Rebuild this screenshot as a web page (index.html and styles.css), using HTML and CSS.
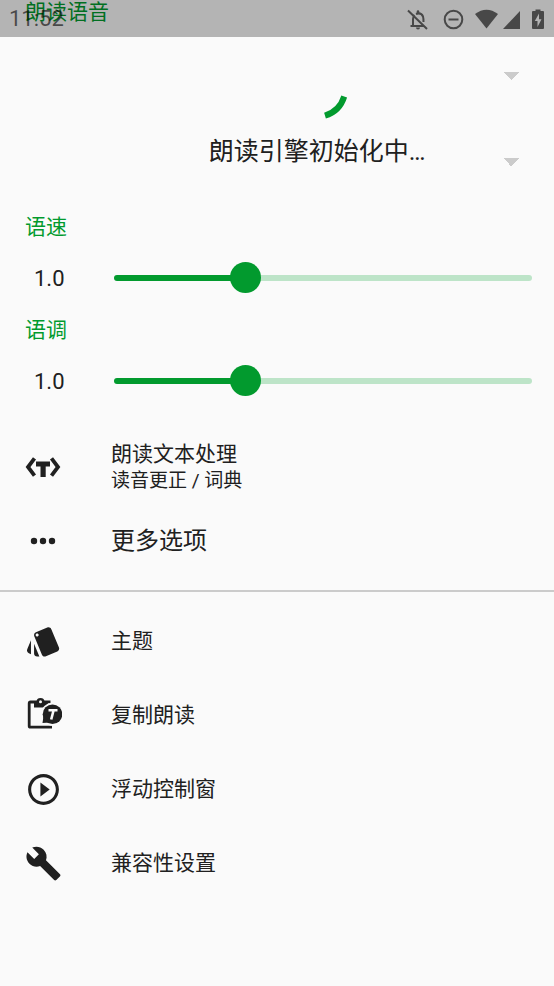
FILE: index.html
```html
<!DOCTYPE html>
<html lang="zh-CN">
<head>
<meta charset="utf-8">
<meta name="viewport" content="width=device-width, initial-scale=1">
<title>朗读语音</title>
<link rel="stylesheet" href="styles.css">
</head>
<body>
<header class="status">
  <span class="clock">11:52</span>
  <svg class="status-icons" width="140" height="24" viewBox="0 0 140 24" aria-hidden="true">
    <g fill="none" stroke="currentColor" stroke-width="2">
      <path d="M2 3.500L21 22M4.500 19H18M7 19V12Q7 9.500 8.500 8M10 7Q15 5 17 9.500Q17.500 11 17.500 15"/>
      <circle cx="47.500" cy="12.500" r="8.800"/>
      <path d="M42.500 12.500H52.500"/>
    </g>
    <g fill="currentColor">
      <path d="M10.700 6V4.500a1.300 1.300 0 0 1 2.600 0V6zM10 20.500h4a2 2 0 0 1-4 0z"/>
      <path d="M69 7Q80.500-1.500 92 7L80.500 21.500z"/>
      <path d="M114 4V22H97z"/>
      <path fill-rule="evenodd" d="M129.500 4V2.500h5V4H137q1 0 1 1V21q0 1-1 1H127q-1 0-1-1V5q0-1 1-1zM133 6.500L128.800 14H131.500V20L135.500 12.200H133z"/>
    </g>
  </svg>
</header>
<main>
  <section class="voice">
    <h2 class="label">朗读语音</h2>
    <select class="picker" aria-label="朗读引擎" disabled><option></option></select>
    <select class="picker" aria-label="语音" disabled><option></option></select>
    <div class="loading" role="status">
      <svg width="64" height="64" viewBox="0 0 64 64" aria-hidden="true"><path d="M59.200 40.500A29 29 0 0 1 40 59.700" fill="none" stroke="#029a2e" stroke-width="6"/></svg>
      <span>朗读引擎初始化中…</span>
    </div>
  </section>
  <section class="setting">
    <label class="label" for="rate">语速</label>
    <div class="control"><output for="rate">1.0</output><input id="rate" type="range" min="0" max="100" value="30"></div>
  </section>
  <section class="setting">
    <label class="label" for="pitch">语调</label>
    <div class="control"><output for="pitch">1.0</output><input id="pitch" type="range" min="0" max="100" value="30"></div>
  </section>
  <nav class="menu">
    <button class="item" type="button">
      <svg class="icon" viewBox="0 0 37 37" aria-hidden="true"><path d="M9.500 9.300L3 18L9.500 26.700M26.500 9.300L33 18L26.500 26.700" fill="none" stroke="currentColor" stroke-width="3.800"/><path d="M11 12.500H25V17.500H20.700V28H15.500V17.500H11z"/></svg>
      <span class="text"><span>朗读文本处理</span><small>读音更正 / 词典</small></span>
    </button>
    <button class="item more" type="button">
      <svg class="icon" viewBox="0 0 37 37" aria-hidden="true"><circle cx="9" cy="18" r="3.200"/><circle cx="18" cy="18" r="3.200"/><circle cx="27" cy="18" r="3.200"/></svg>
      <span class="text">更多选项</span>
    </button>
  </nav>
  <nav class="menu divided">
    <button class="item" type="button">
      <svg class="icon" viewBox="0 0 24 24" aria-hidden="true"><path d="M2.530 19.650l1.340.56v-9.030l-2.430 5.860c-.41 1.020.08 2.190 1.090 2.610zm19.500-3.700L17.070 3.980c-.31-.75-1.040-1.210-1.810-1.230-.26 0-.53.04-.79.15L7.100 5.950c-.75.31-1.210 1.030-1.230 1.800-.01.27.04.54.15.8l4.960 11.970c.31.76 1.050 1.220 1.830 1.230.26 0 .52-.05.77-.15l7.360-3.050c1.020-.42 1.510-1.590 1.090-2.600zM7.880 8.750c-.55 0-1-.45-1-1s.45-1 1-1 1 .45 1 1-.45 1-1 1zm-2 11c0 1.100.9 2 2 2h1.450l-3.450-8.340v6.340z"/></svg>
      <span class="text">主题</span>
    </button>
    <button class="item" type="button">
      <svg class="icon" viewBox="0 0 37 37" aria-hidden="true"><path d="M27 30.200H5.500Q4.200 30.200 4.200 29V6.500Q4.200 5 5.500 5H25.500" fill="none" stroke="currentColor" stroke-width="2.800"/><path d="M9 5H23V10.500H9z"/><circle cx="15.500" cy="5" r="4"/><circle cx="15.500" cy="4.800" r="1.500" fill="#fafafa"/><circle cx="27.500" cy="17.200" r="11.500" fill="#fafafa"/><circle cx="27.500" cy="17.200" r="9.800"/><path d="M17.500 26L18.500 19L25 25.500z"/><path d="M23.500 13.200H32.500M28.600 13.200L26.200 22.500" fill="none" stroke="#fafafa" stroke-width="2.600"/></svg>
      <span class="text">复制朗读</span>
    </button>
    <button class="item" type="button">
      <svg class="icon" viewBox="0 0 24 24" aria-hidden="true"><path d="M10 16.500l6-4.500-6-4.500v9zM12 2C6.480 2 2 6.480 2 12s4.480 10 10 10 10-4.480 10-10S17.520 2 12 2zm0 18c-4.410 0-8-3.590-8-8s3.590-8 8-8 8 3.590 8 8-3.590 8-8 8z"/></svg>
      <span class="text">浮动控制窗</span>
    </button>
    <button class="item" type="button">
      <svg class="icon" viewBox="0 0 24 24" aria-hidden="true"><path d="M22.700 19l-9.100-9.100c.9-2.300.4-5-1.500-6.900-2-2-5-2.400-7.400-1.300L9 6 6 9 1.600 4.700C.4 7.100.9 10.100 2.900 12.100c1.900 1.900 4.600 2.400 6.900 1.500l9.100 9.100c.4.4 1 .4 1.400 0l2.300-2.300c.5-.4.5-1.100.1-1.400z"/></svg>
      <span class="text">兼容性设置</span>
    </button>
  </nav>
</main>
</body>
</html>
```

FILE: styles.css
```css
* { box-sizing: border-box; }
body {
  margin: 0;
  min-height: 100vh;
  background: #fafafa;
  color: #202020;
  font-family: Roboto, "Noto Sans CJK SC", sans-serif;
  font-size: 21px;
}
.status {
  position: absolute;
  z-index: 1;
  top: 0;
  left: 0;
  right: 0;
  height: 37px;
  padding: 0 8px 0 9px;
  display: flex;
  align-items: center;
  justify-content: space-between;
  background: rgba(0, 0, 0, 0.28);
  color: #484848;
}
.clock { color: rgba(0, 0, 0, 0.6); font-size: 22px; }
.label {
  display: block;
  margin: 0;
  padding-left: 25px;
  color: #029a2e;
  font-size: 21px;
  font-weight: 400;
  line-height: 38px;
}
.voice { position: relative; padding-bottom: 3px; }
.voice .label { line-height: 24px; padding-bottom: 9px; }
.picker {
  appearance: none;
  display: block;
  width: 100%;
  height: 86px;
  border: 0;
  opacity: 1;
  background: conic-gradient(from -45deg at 50% 100%, #cbcbcb 90deg, transparent 0) right 35px center / 16px 8px no-repeat;
}
.loading {
  position: absolute;
  top: 56px;
  left: 80px;
  right: 0;
  display: flex;
  flex-direction: column;
  align-items: center;
  gap: 14px;
  font-size: 25px;
  line-height: 36px;
}
.control {
  display: flex;
  align-items: center;
  height: 64px;
  margin-bottom: 1px;
  padding-right: 22px;
}
.control output { width: 114px; padding-left: 34px; font-size: 22px; }
input[type="range"] {
  appearance: none;
  flex: 1;
  min-width: 0;
  height: 31px;
  margin: 0;
  background: none;
}
input[type="range"]::-webkit-slider-runnable-track {
  height: 6px;
  border-radius: 3px;
  background: linear-gradient(to right, #029a2e 31%, #bde4c8 31%);
}
input[type="range"]::-webkit-slider-thumb {
  appearance: none;
  width: 31px;
  height: 31px;
  margin-top: -13px;
  border-radius: 50%;
  background: #029a2e;
}
.menu { padding: 16px 0 12px; }
.menu.divided { border-top: 2px solid #cbcbcb; padding-top: 12px; }
.item {
  display: flex;
  align-items: center;
  gap: 49px;
  width: 100%;
  height: 74px;
  padding: 0 25px;
  border: 0;
  background: none;
  color: inherit;
  font: inherit;
  text-align: left;
}
.item.more { font-size: 24px; }
.icon { width: 37px; height: 37px; fill: currentColor; flex: none; }
.text { display: flex; flex-direction: column; line-height: 28px; }
.text small { font-size: 19px; line-height: 26px; }
```
